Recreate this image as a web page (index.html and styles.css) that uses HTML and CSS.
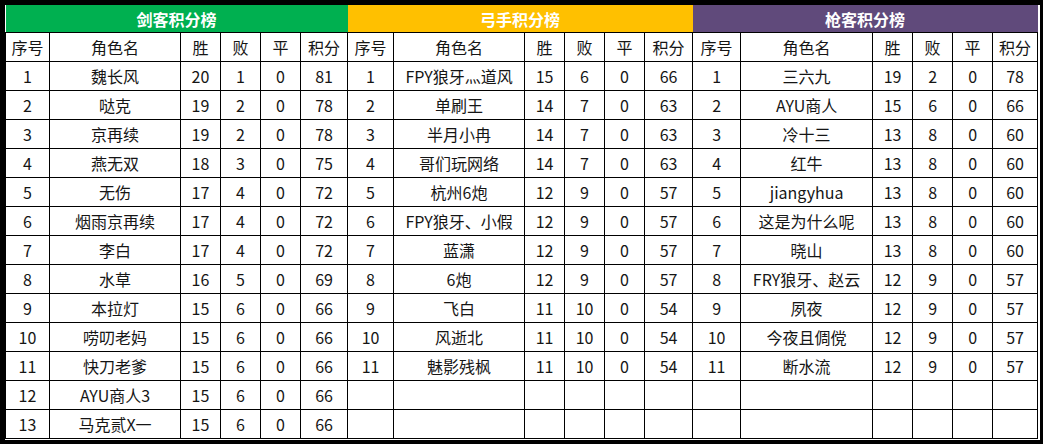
FILE: index.html
```html
<!DOCTYPE html>
<html lang="zh">
<head>
<meta charset="utf-8">
<title>积分榜</title>
<link rel="stylesheet" href="styles.css">
</head>
<body>
<div class="frame">
<table class="board">
<colgroup>
<col class="c-no1"><col class="c-name1"><col class="c-n"><col class="c-n"><col class="c-n"><col class="c-pt1">
<col class="c-no2"><col class="c-name2"><col class="c-n"><col class="c-n"><col class="c-n"><col class="c-pt2">
<col class="c-no3"><col class="c-name3"><col class="c-n"><col class="c-n"><col class="c-n"><col class="c-pt3">
</colgroup>
<thead>
<tr class="title-row">
<th colspan="6" class="t-green">剑客积分榜</th>
<th colspan="6" class="t-yellow">弓手积分榜</th>
<th colspan="6" class="t-purple">枪客积分榜</th>
</tr>
<tr class="head-row">
<th>序号</th><th>角色名</th><th>胜</th><th>败</th><th>平</th><th>积分</th>
<th>序号</th><th>角色名</th><th>胜</th><th>败</th><th>平</th><th>积分</th>
<th>序号</th><th>角色名</th><th>胜</th><th>败</th><th>平</th><th>积分</th>
</tr>
</thead>
<tbody>
<tr><td>1</td><td>魏长风</td><td>20</td><td>1</td><td>0</td><td>81</td><td>1</td><td>FPY狼牙灬道风</td><td>15</td><td>6</td><td>0</td><td>66</td><td>1</td><td>三六九</td><td>19</td><td>2</td><td>0</td><td>78</td></tr>
<tr><td>2</td><td>哒克</td><td>19</td><td>2</td><td>0</td><td>78</td><td>2</td><td>单刷王</td><td>14</td><td>7</td><td>0</td><td>63</td><td>2</td><td>AYU商人</td><td>15</td><td>6</td><td>0</td><td>66</td></tr>
<tr><td>3</td><td>京再续</td><td>19</td><td>2</td><td>0</td><td>78</td><td>3</td><td>半月小冉</td><td>14</td><td>7</td><td>0</td><td>63</td><td>3</td><td>冷十三</td><td>13</td><td>8</td><td>0</td><td>60</td></tr>
<tr><td>4</td><td>燕无双</td><td>18</td><td>3</td><td>0</td><td>75</td><td>4</td><td>哥们玩网络</td><td>14</td><td>7</td><td>0</td><td>63</td><td>4</td><td>红牛</td><td>13</td><td>8</td><td>0</td><td>60</td></tr>
<tr><td>5</td><td>无伤</td><td>17</td><td>4</td><td>0</td><td>72</td><td>5</td><td>杭州6炮</td><td>12</td><td>9</td><td>0</td><td>57</td><td>5</td><td>jiangyhua</td><td>13</td><td>8</td><td>0</td><td>60</td></tr>
<tr><td>6</td><td>烟雨京再续</td><td>17</td><td>4</td><td>0</td><td>72</td><td>6</td><td>FPY狼牙、小假</td><td>12</td><td>9</td><td>0</td><td>57</td><td>6</td><td>这是为什么呢</td><td>13</td><td>8</td><td>0</td><td>60</td></tr>
<tr><td>7</td><td>李白</td><td>17</td><td>4</td><td>0</td><td>72</td><td>7</td><td>蓝潇</td><td>12</td><td>9</td><td>0</td><td>57</td><td>7</td><td>晓山</td><td>13</td><td>8</td><td>0</td><td>60</td></tr>
<tr><td>8</td><td>水草</td><td>16</td><td>5</td><td>0</td><td>69</td><td>8</td><td>6炮</td><td>12</td><td>9</td><td>0</td><td>57</td><td>8</td><td>FRY狼牙、赵云</td><td>12</td><td>9</td><td>0</td><td>57</td></tr>
<tr><td>9</td><td>本拉灯</td><td>15</td><td>6</td><td>0</td><td>66</td><td>9</td><td>飞白</td><td>11</td><td>10</td><td>0</td><td>54</td><td>9</td><td>夙夜</td><td>12</td><td>9</td><td>0</td><td>57</td></tr>
<tr><td>10</td><td>唠叨老妈</td><td>15</td><td>6</td><td>0</td><td>66</td><td>10</td><td>风逝北</td><td>11</td><td>10</td><td>0</td><td>54</td><td>10</td><td>今夜且倜傥</td><td>12</td><td>9</td><td>0</td><td>57</td></tr>
<tr><td>11</td><td>快刀老爹</td><td>15</td><td>6</td><td>0</td><td>66</td><td>11</td><td>魅影残枫</td><td>11</td><td>10</td><td>0</td><td>54</td><td>11</td><td>断水流</td><td>12</td><td>9</td><td>0</td><td>57</td></tr>
<tr><td>12</td><td>AYU商人3</td><td>15</td><td>6</td><td>0</td><td>66</td><td></td><td></td><td></td><td></td><td></td><td></td><td></td><td></td><td></td><td></td><td></td><td></td></tr>
<tr><td>13</td><td>马克贰X一</td><td>15</td><td>6</td><td>0</td><td>66</td><td></td><td></td><td></td><td></td><td></td><td></td><td></td><td></td><td></td><td></td><td></td><td></td></tr>
</tbody>
</table>
</div>
</body>
</html>
```

FILE: styles.css
```css
html, body {
  margin: 0;
  padding: 0;
  background: #000;
}
body {
  width: 1043px;
  height: 444px;
  overflow: hidden;
  font-family: "Noto Sans CJK SC", "Microsoft YaHei", sans-serif;
}
.frame {
  margin: 5px 0 0 5px;
  width: 1034px;
  background: #fff;
  padding: 0 1px 1px 0;
}
.board {
  border-collapse: collapse;
  table-layout: fixed;
  width: 1033px;
  background: #fff;
  color: #151515;
  font-size: 16px;
}
.c-no1 { width: 44px; }
.c-name1 { width: 131px; }
.c-n { width: 40px; }
.c-pt1 { width: 47px; }
.c-no2 { width: 46px; }
.c-name2 { width: 131px; }
.c-pt2 { width: 48px; }
.c-no3 { width: 48px; }
.c-name3 { width: 132px; }
.c-pt3 { width: 45px; }

.board th, .board td {
  padding: 0;
  text-align: center;
  vertical-align: middle;
  line-height: 1;
  white-space: nowrap;
  overflow: hidden;
}
.board td, .head-row th {
  border: 1px solid #000;
  font-weight: normal;
}
.title-row th {
  height: 27px;
  color: #fff;
  font-weight: bold;
  font-size: 16px;
  border: none;
  border-bottom: 1px solid #000;
}
.t-green { background: #00b050; }
.t-yellow { background: #ffc000; }
.t-purple { background: #604a7b; }
.head-row th { height: 28px; }
.board tbody td { height: 28px; }
```
